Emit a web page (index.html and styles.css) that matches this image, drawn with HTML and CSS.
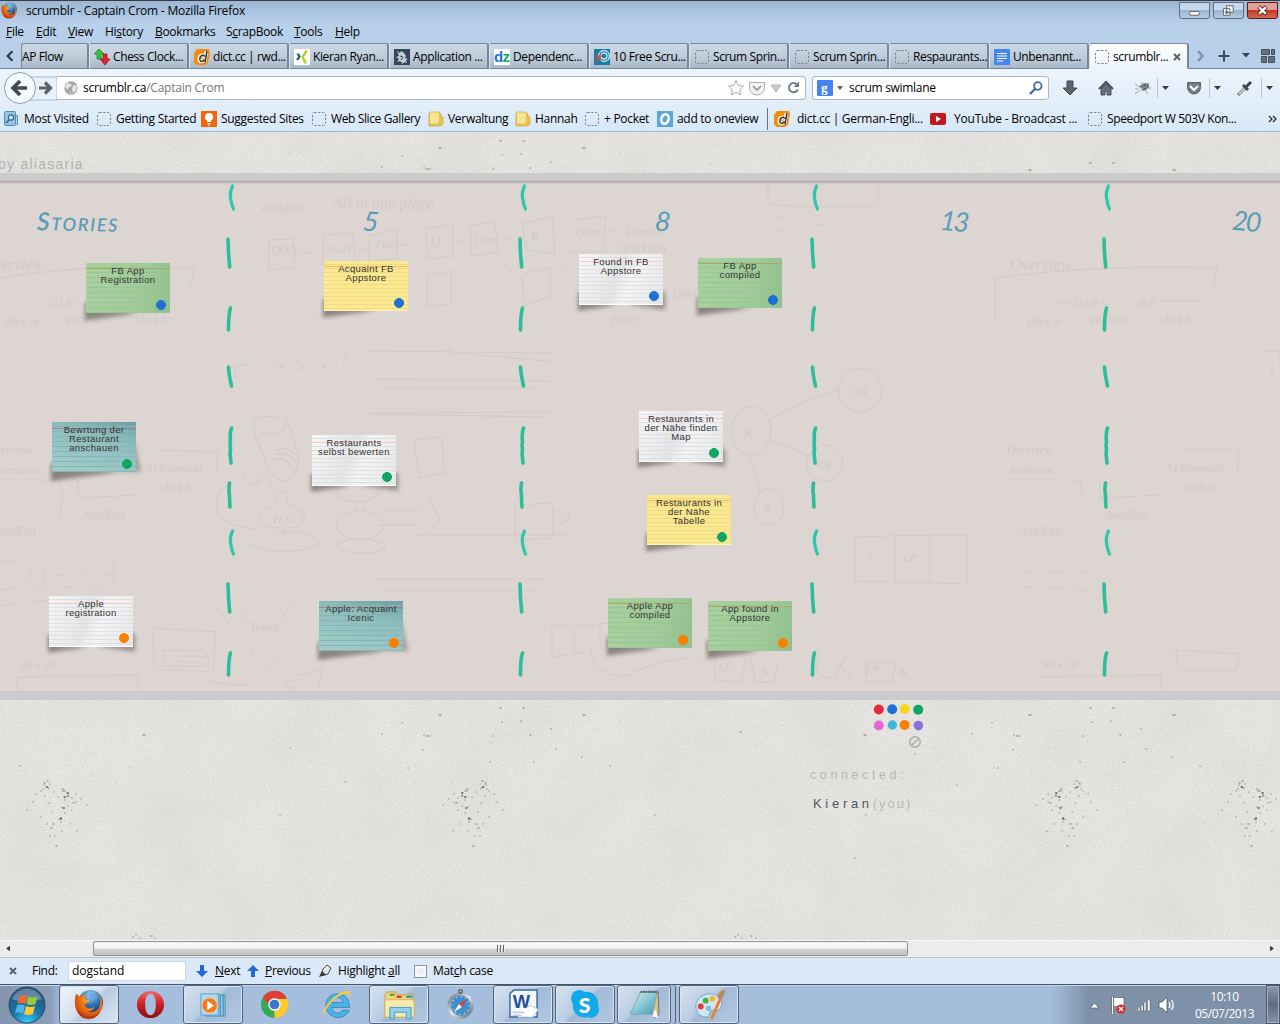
FILE: index.html
```html
<!DOCTYPE html>
<html lang="en">
<head>
<meta charset="utf-8">
<title>scrumblr - Captain Crom</title>
<link rel="stylesheet" href="styles.css">
</head>
<body>
<svg class="defs" width="0" height="0">
  <defs>
    <radialGradient id="fox" cx=".6" cy=".3" r=".8"><stop offset="0" stop-color="#ffc23a"/><stop offset=".5" stop-color="#ee7013"/><stop offset="1" stop-color="#b8330b"/></radialGradient>
    <radialGradient id="globe" cx=".5" cy=".2" r=".8"><stop offset="0" stop-color="#9bd4f5"/><stop offset=".5" stop-color="#2f72b8"/><stop offset="1" stop-color="#12306d"/></radialGradient>
    <radialGradient id="orb" cx=".5" cy="1" r=".9"><stop offset="0" stop-color="#35d5ff"/><stop offset=".45" stop-color="#1b77ad"/><stop offset="1" stop-color="#27547d"/></radialGradient>
    <linearGradient id="opera" x2="0" y2="1"><stop offset="0" stop-color="#f0696b"/><stop offset=".5" stop-color="#c81f27"/><stop offset="1" stop-color="#8c0d14"/></linearGradient>
    <linearGradient id="steel" x2="1" y2="1"><stop offset="0" stop-color="#5d6268"/><stop offset=".5" stop-color="#e8ebee"/><stop offset="1" stop-color="#4b5057"/></linearGradient>
    <linearGradient id="pad" x2="1" y2="1"><stop offset="0" stop-color="#d4f3f5"/><stop offset="1" stop-color="#3d9fb4"/></linearGradient>
    <symbol id="blank" viewBox="0 0 16 16"><rect x="1.5" y="1.5" width="13" height="13" rx="2" fill="none" stroke="#777f88" stroke-dasharray="2.2 1.6"/></symbol>
    <symbol id="folder" viewBox="0 0 16 16"><path d="M2 1h9l1 2h1v3h2v7l-2 2H1V2z" fill="#e6c453" stroke="#cba738" stroke-width=".7"/><path d="M2 1.500h9V11l-2 1.500H2z" fill="#f8e496"/></symbol>
    <symbol id="dict" viewBox="0 0 16 16"><path d="M3 0h12l1 3-2 11-3 2H3l-3-2V4z" fill="#f58b0a"/><path d="M12.500 2l-2 11.500M10.300 7.500c-2-2.500-5.300-.5-5 3 .3 2.500 3 2.500 4.500 0" fill="none" stroke="#fff" stroke-width="3.600"/><path d="M13 2l-2 11.500M10.800 7.500c-2-2.500-5.300-.5-5 3 .3 2.500 3 2.500 4.500 0" fill="none" stroke="#333" stroke-width="1.500"/></symbol>
    <symbol id="firefox" viewBox="0 0 32 32"><circle cx="17" cy="14" r="13" fill="url(#globe)"/><path d="M15 5c3-1 8 0 9 4-3-1-5 0-6 2" fill="#65aadb"/><path d="M2 5c2 1 3 2 4 3 2-2 5-2 7-2-2 2-2 4-1 5 2 0 3 0 4 1-1 3-4 2-5 4 1 5 7 5 10 2-1 4-4 6-8 5 7 3 14-1 14-8 1-5-1-9-4-12 6 4 8 12 5 19-3 7-10 10-17 8C2 27-1 17 2 5z" fill="url(#fox)"/><path d="M4 20c4 9 16 12 23 3-3 7-9 9-15 8-5-1-8-5-8-11z" fill="#a92b10" opacity=".6"/></symbol>
    <symbol id="down" viewBox="0 0 12 14"><path d="M4 1h4v6h4l-6 6-6-6h4z"/></symbol>
    <symbol id="caret" viewBox="0 0 8 5"><path d="M0 0h8L4 5z"/></symbol>
    <g id="dashes" fill="none" stroke="#2dbd9a" stroke-width="3.600" stroke-linecap="round" stroke-linejoin="round">
      <path d="M12.500 6q-3 6-2 12 1 7 3 11" stroke="#2fc9a9" stroke-width="3.200"/>
      <path d="M8 59l.5 14 1.200 14M10.500 128q-2 6-2 22M8.500 187q0 5 3 19M11.500 248q-2 5-1 14l-.5 3q1 5 0 8l1 10M9.500 303q-1 8 0 12 0 6 .5 12"/>
    </g>
    <symbol id="divider" viewBox="0 0 20 508"><use href="#dashes" y="-2"/><use href="#dashes" y="343"/></symbol>
    <g id="cluster" fill="none" stroke-linecap="round">
      <path stroke="#8b8579" stroke-width="1.500" opacity=".75" d="M0 0h.1M5-6h1M3 5h.1M-4 3h.1M10 2h.1M14-3h.1M-8-1h.1M-13 4h.1M6 12h.1M3 18h.1M8 24h1M16 17h.1M19 8h.1M23 1h.1M27-4h.1M20-14h1M24-10h.1M18-11h.1M-2 29h.1M6 36h.1M16 33h1M13 41h.1M21 29h.1M32-1h.1M35 7h.1M-9 36h.1M11 51h1M-19 10h.1M41 15h.1M27 22h.1M-1 1h2M-6 8h1M-4 15h.1M0 11h.1M3-4h2M-8 7h.1M23-12h1M25-6h.1M19-7h1M7 27h.1M14 29h1M18 41h.1"/>
      <path stroke="#5d584e" stroke-width="1.900" opacity=".8" d="M0-2h.6M3 2h.6M7 23v1M21-8h.5M4 13h.5"/>
      <path stroke="#aaa59b" stroke-width="1.200" opacity=".6" d="M-25-20h.1M-40 10h.1M-48-12h.1M-34 26h.1M40-30h.1M55-20h.1M63-5h.1M58 28h.1M48 47h.1M2-30h.1M-7-48h.1M31-53h.1M71 19h.1M-62-28h.1"/>
    </g>
    <g id="sparse" fill="none" stroke-linecap="round">
      <path stroke="#77736a" stroke-width="1.600" opacity=".65" d="M0 0h1M23 0h1M2 14h.1M21 13h.1M-61 7h2M83 7h2M-76 27h.1M-73 28h1M-70 28h.1M-98 15h.1M51 21h.1M-7 28h.1M30 27h.6M56 41h.1M-118 26h.1M82 49h.1M-77 42h.1M-92 60h.1M110 58h.1M-10 54h.1M34 54h.1"/>
      <path stroke="#aaa59b" stroke-width="1.200" opacity=".7" d="M-140 12h.1M-155 40h.1M-180 20h.1M-190 54h.1M-210 12h.1M-225 33h.1M120 12h.1M145 31h.1M165 16h.1M180 45h.1M211 23h.1M236 9h.1M255 38h.1M281 17h.1M-48 74h.1M65 71h.1"/>
    </g>
    <filter id="grain" x="0" y="0" width="100%" height="100%"><feTurbulence type="fractalNoise" baseFrequency=".7" numOctaves="2" seed="4"/><feColorMatrix values="0 0 0 0 .5  0 0 0 0 .49  0 0 0 0 .46  .7 0 0 0 -.26"/></filter>
    <filter id="mottle" x="0" y="0" width="100%" height="100%"><feTurbulence type="fractalNoise" baseFrequency=".014" numOctaves="3" seed="9"/><feColorMatrix values="0 0 0 0 .45  0 0 0 0 .43  0 0 0 0 .38  .2 0 0 0 -.07"/></filter>
  </defs>
</svg>

<header class="chrome">
  <div class="titlebar">
    <svg class="i17"><use href="#firefox"/></svg>
    <span class="title">scrumblr - Captain Crom - Mozilla Firefox</span>
    <div class="winbtns">
      <svg class="winbtn" viewBox="0 0 30 16"><rect x="10" y="9" width="10" height="4" rx="1" fill="#fff" stroke="#555e6c"/></svg>
      <svg class="winbtn" viewBox="0 0 30 16"><path d="M13 3h7v7h-7zM9.500 6h7v7h-7z" fill="#fff" stroke="#555e6c"/><path d="M12 9h2v2h-2z" fill="#8b9cb1" stroke="#555e6c"/></svg>
      <svg class="winbtn close" viewBox="0 0 30 16"><path d="M11 4l8 8M19 4l-8 8" stroke="#5a3434" stroke-width="4.500"/><path d="M11.500 4.500l7 7M18.500 4.500l-7 7" stroke="#fff" stroke-width="2.500"/></svg>
    </div>
  </div>
  <nav class="menu"><span><u>F</u>ile</span><span><u>E</u>dit</span><span><u>V</u>iew</span><span>Hi<u>s</u>tory</span><span><u>B</u>ookmarks</span><span>S<u>c</u>rapBook</span><span><u>T</u>ools</span><span><u>H</u>elp</span></nav>
  <div class="tabs">
    <svg class="scroll-left" viewBox="0 0 22 26"><path d="M13 8l-5 5 5 5" fill="none" stroke="#2e3640" stroke-width="2.200"/></svg>
    <div class="tab cut"><span>AP Flow</span></div>
    <div class="tab"><svg class="i16" viewBox="0 0 16 16"><path d="M5 0l5 5H7v5H3V5H0z" fill="#2fc83a" stroke="#167b20" stroke-width=".7"/><path d="M9 5h4v5h3l-5 6-5-6h3z" fill="#e2252e" stroke="#8b1116" stroke-width=".7"/></svg><span>Chess Clock...</span></div>
    <div class="tab"><svg class="i16"><use href="#dict"/></svg><span>dict.cc | rwd...</span></div>
    <div class="tab"><svg class="i16" viewBox="0 0 16 16"><rect width="16" height="16" fill="#fff"/><path d="M2.500 4.500h2.500l1.800 3L4.500 11H2l2.300-3.500z" fill="#0d5c63"/><path d="M11.500 1.500h2.700L10 8l3 6.500h-2.700L7.300 8z" fill="#b3cf1b"/></svg><span>Kieran Ryan...</span></div>
    <div class="tab"><svg class="i16" viewBox="0 0 16 16"><rect width="16" height="16" fill="#33475a"/><path d="M3 2l3 2 1-2 3 2 2 3-1 2 3 1-2 1 1 3-3-1-1 2-3-3-3 1 2-3-3-2 3-1z" fill="#c7cdd2"/><path d="M6 7l3 1-2 3" stroke="#33475a" fill="none"/></svg><span>Application ...</span></div>
    <div class="tab"><svg class="i16" viewBox="0 0 16 16"><rect width="16" height="16" fill="#fff"/><text x="0" y="13" class="dz" fill="#1673d8">d</text><text x="8.500" y="13" class="dz" fill="#21a55d">z</text></svg><span>Dependenc...</span></div>
    <div class="tab"><svg class="i16" viewBox="0 0 16 16"><rect width="16" height="16" fill="#187ca9"/><g fill="none" stroke="#cbe4ec" stroke-width="1.300"><circle cx="10" cy="7" r="5.500"/><circle cx="10" cy="7" r="3"/></g><path d="M2 4l3 3 4-1-3 3 2 4-4-3-3 4 2-6z" fill="#d94d42"/></svg><span>10 Free Scru...</span></div>
    <div class="tab"><svg class="i16"><use href="#blank"/></svg><span>Scrum Sprin...</span></div>
    <div class="tab"><svg class="i16"><use href="#blank"/></svg><span>Scrum Sprin...</span></div>
    <div class="tab"><svg class="i16"><use href="#blank"/></svg><span>Respaurants...</span></div>
    <div class="tab"><svg class="i16" viewBox="0 0 16 16"><rect width="16" height="16" rx="1" fill="#4285f4"/><path d="M3 4.500h10M3 7h10M3 9.500h10M3 12h6" stroke="#fff" stroke-width="1.200"/></svg><span>Unbenannt...</span></div>
    <div class="tab active"><svg class="i16"><use href="#blank"/></svg><span>scrumblr...</span><svg class="tabx" viewBox="0 0 8 8"><path d="M1 1l6 6M7 1L1 7" stroke="#555d66" stroke-width="1.800"/></svg></div>
    <svg class="tabtools" viewBox="0 0 91 26"><path d="M9 8l4.500 5L9 18" fill="none" stroke="#7b8ea3" stroke-width="2.200"/><path d="M35 7.500v11M29.500 13h11" stroke="#3f4955" stroke-width="2.200"/><path d="M53 10h8l-4 4.500z" fill="#3a4450"/><g fill="#66717e" stroke="#46505c"><path d="M72.500 6.500h8v5h-8zM82.500 6.500h3v5h-3zM72.500 13.500h5v6h-5zM79.500 13.500h6v6h-6z"/></g></svg>
  </div>
  <div class="navbar">
    <svg class="back" viewBox="0 0 57 36"><path d="M20 7h37v23H20z" fill="#e6f1fc" stroke="#a9bdd2"/><circle cx="20" cy="18" r="15.500" fill="#f5faff" stroke="#8c9fb5"/><path d="M20 11l-7 7 7 7M14 18h13" fill="none" stroke="#414b56" stroke-width="3.600"/><path d="M45 12.500l5.500 5.500-5.500 5.500M39 18h10.500" fill="none" stroke="#56616d" stroke-width="3.200"/></svg>
    <div class="urlbar">
      <svg class="i14" viewBox="0 0 14 14"><circle cx="7" cy="7" r="6.700" fill="#a5a5a5"/><path d="M3 2l4 1 1 2-3 1-1 3-3-3zM9 4l4 1-1 5-3 2-1-4zM5 10l2 1v2z" fill="#e5e5e5"/></svg>
      <span class="url">scrumblr.ca<em>/Captain Crom</em></span>
      <svg class="urltools" viewBox="0 0 74 20"><path d="M10 2.500l2.300 4.900 5.200.7-3.800 3.700.9 5.200-4.600-2.500L5.400 17l.9-5.200-3.800-3.700 5.200-.7z" fill="#fafafa" stroke="#a8adb3"/><path d="M23.500 4.500h15v5a7.500 7.500 0 0 1-15 0z" fill="#f4f4f4" stroke="#a8adb3"/><path d="M27 8l4 4 4-4" fill="none" stroke="#a0a5ab" stroke-width="2"/><path d="M45 7h10l-5 7z" fill="#c4cbd5" stroke="#98a1ac" stroke-width=".7"/><path d="M71 6.500a4.600 4.600 0 1 0 .8 5" fill="none" stroke="#737d88" stroke-width="2"/><path d="M73 3.500v5.500h-5.500z" fill="#737d88"/></svg>
    </div>
    <div class="search">
      <svg class="i16" viewBox="0 0 16 16"><rect width="16" height="16" rx="1" fill="#4584f0"/><text x="4" y="11.500" class="gg">g</text></svg>
      <svg class="caret"><use href="#caret"/></svg>
      <span>scrum swimlane</span>
      <svg class="lens" viewBox="0 0 14 14"><circle cx="8.800" cy="5" r="3.800" fill="none" stroke="#3a6fa8" stroke-width="1.800"/><path d="M6 8l-5 5" stroke="#3a6fa8" stroke-width="2.400"/></svg>
    </div>
    <svg class="navtools" viewBox="0 0 229 36"><path d="M16 11h6v7h4l-7 7-7-7h4z" fill="#5b6470" stroke="#404954"/><path d="M48 19l7-7 7 7" fill="none" stroke="#47515d" stroke-width="2"/><path d="M50 19l5-5 5 5v6h-4v-4h-2v4h-4z" fill="#65707d" stroke="#47515d"/><ellipse cx="93" cy="17" rx="5.500" ry="3.200" transform="rotate(-25 93 17)" fill="#66696c"/><path d="M84 14l4 3M84 19l4 0M91 12l1 6M98 13l-6 6M84 24l5-4M94 20l3 4M95 18h5" stroke="#9a9ea2"/><circle cx="89" cy="19.500" r="2.300" fill="#ddd"/><path d="M106.500 8v20M158.500 8v20M210.500 8v20" stroke="#bac8d6"/><g fill="#333b44"><path d="M111 16h7l-3.500 4zM163 16h7l-3.500 4zM215 16h7l-3.500 4z"/></g><path d="M136.500 12.500h13v5a6.500 6.500 0 0 1-13 0z" fill="#757b82" stroke="#5b6065"/><path d="M139 16l4 4 4-4" fill="none" stroke="#fff" stroke-width="2.200"/><path d="M187 25l8-8" stroke="#70767c" stroke-width="3"/><path d="M188 24l6-6" stroke="#e4e6e8" stroke-width="1.300"/><path d="M192 15l5 5M195 17l5-5" stroke="#3f4449" stroke-width="3"/></svg>
  </div>
  <nav class="bookmarks">
    <span><svg class="i16" viewBox="0 0 16 16"><rect x=".5" y=".5" width="11" height="14" rx="1" fill="#94c6e5" stroke="#4b8fb9"/><path d="M12 4.500h1.500v9H12" fill="#b6daf0" stroke="#4b8fb9"/><circle cx="7" cy="6.500" r="2.600" fill="#def1fb" stroke="#33617f" stroke-width="1.200"/><path d="M5 9l-3 3" stroke="#33617f" stroke-width="1.600"/></svg>Most Visited</span>
    <span><svg class="i16"><use href="#blank"/></svg>Getting Started</span>
    <span><svg class="i16" viewBox="0 0 16 16"><rect width="16" height="16" fill="#f4660c"/><path d="M8 2a4 4 0 0 0-2 7.500V11h4V9.500A4 4 0 0 0 8 2z" fill="#fff"/><path d="M6.500 12.500h3M7 14h2" stroke="#fff"/></svg>Suggested Sites</span>
    <span class="slice"><svg class="i16"><use href="#blank"/></svg>Web Slice Gallery</span>
    <span><svg class="i16"><use href="#folder"/></svg>Verwaltung</span>
    <span><svg class="i16"><use href="#folder"/></svg>Hannah</span>
    <span><svg class="i16"><use href="#blank"/></svg>+ Pocket</span>
    <span class="oneview"><svg class="i16" viewBox="0 0 16 16"><rect width="16" height="16" fill="#5aa7d8"/><ellipse cx="8" cy="8" rx="3.600" ry="4.800" transform="rotate(20 8 8)" fill="none" stroke="#fff" stroke-width="2.600"/></svg>add to oneview</span>
    <span class="wide"><svg class="i16"><use href="#dict"/></svg>dict.cc | German-Engli...</span>
    <span class="wide tube"><svg class="i16" viewBox="0 0 16 16"><rect y="2" width="16" height="12" rx="2" fill="#c4161c"/><path d="M6 5l5 3-5 3z" fill="#fff"/></svg>YouTube - Broadcast ...</span>
    <span class="slice"><svg class="i16"><use href="#blank"/></svg>Speedport W 503V Kon...</span>
    <svg class="more" viewBox="0 0 9 8"><path d="M1 1l3 3-3 3M5 1l3 3-3 3" fill="none" stroke="#222" stroke-width="1.200"/></svg>
  </nav>
</header>

<main class="page">
  <svg class="concrete" viewBox="0 132 1280 808">
    <rect y="132" width="1280" height="808" filter="url(#mottle)"/>
    <rect y="132" width="1280" height="808" filter="url(#grain)"/>
    <use href="#sparse" x="1090" y="163"/><use href="#sparse" x="500" y="141"/><use href="#sparse" x="-90" y="160"/>
    <use href="#sparse" x="1090" y="708"/><use href="#sparse" x="500" y="708"/><use href="#sparse" x="-90" y="708"/>
    <use href="#cluster" x="1056" y="795"/><use href="#cluster" x="462" y="795"/>
    <use href="#cluster" transform="translate(68 795) scale(-1 1)"/><use href="#cluster" transform="translate(1263 795) scale(-1 1)"/>
    <g fill="none" stroke="#77716a" stroke-width="1.500" stroke-linecap="round" opacity=".6"><path d="M864 735h2M143 735h2M915 754h.1M866 815h.1M957 785h.1M855 858h.1M345 782h.1M133 937h.5M136 935h.1M140 938h.1M151 936h1M155 938h.1M735 937h.5M738 935h.1M742 938h.1M751 936h1M756 938h.1M280 815h.1M655 815h.1M740 732h1M290 748h.1"/></g>
  </svg>
  <div class="byline">by aliasaria</div>
  <section class="board">
    <svg class="sketch" viewBox="0 182 1280 508">
      <g fill="none" stroke="#d3cbc7" stroke-width="1.100" stroke-linecap="round">
        <path d="M269 240l24-1 2 28-26 3zM323 235l30-2 2 30-32 2zM368 236l29-6v28l-28 4zM426 228l27-3v31l-25 3zM470 226l25-4 3 30-26 4zM522 224l30-8 3 38-28-4zM573 220l33-4-3 36-32 0M299 253h14M357 249h8M400 245h8M457 241h8M503 238h8M554 234h9M609 231h7M502 262l10 11M557 273l10-12M427 275l24-4v33l-24 3zM522 274l28-6v28l-26 10z"/>
        <path d="M234 352h114l-5 14M235 376v-11h15M277 362l6 4-6 4M297 362l6 4-6 4M319 362l6 4-6 4M366 351l185 2M374 379l176 2M370 413l180-1M382 388h155M373 414l174 3M450 343v12M460 353l94 9"/>
        <ellipse cx="269" cy="425" rx="16" ry="9"/><path d="M253 430l15 37q6 14 19 14 12-10 12-27l-13-37M272 460q10-5 19 5M274 455q12-5 20 5M277 450q10-4 18 4M243 475q8 14 16 6 4-6 10-6l2 10M230 482c-10 8-18 20-11 32 9 12 21 12 38 16M277 492h9l2 13c24 7 22 23-6 23-28 0-31-16-7-23zM250 540c-8 14 68 15 68 2 0-6-17-11-37-11M272 540l6-8h6l5 9"/><ellipse cx="360" cy="525" rx="23" ry="15"/><ellipse cx="361" cy="546" rx="24" ry="7"/><path d="M337 490q3 12 20 12 18 0 22-12M355 510v-8M365 510v-8M372 525h45M381 510h40M414 440l28-3 2 36-25 5zM412 535h155M374 579h172M385 590h150M515 505l38-2v35l-38 2zM554 510q30 5 2 16M430 500l10 20-9 12"/>
        <ellipse cx="751" cy="431" rx="20" ry="24" /><circle cx="860" cy="390" r="22"/><circle cx="825" cy="463" r="18"/><ellipse cx="769" cy="507" rx="15" ry="18"/><path d="M770 419q30-18 70-30M769 439l41 17M748 454q10 16 11 38M768 183v20q2 5 110 3V182M772 218h16M772 230h13M812 216h20M812 225h16"/>
        <path d="M855 537q50-2 112-2v49l-112-3zM895 536v45M930 537v45M889 557h10M995 278q100-14 222-10l-3 17M995 278v40M1056 302h14M1100 304h20M1160 301h40M1264 351h16v12M1272 375v-10"/>
        <path d="M0 278q80-14 194-10l-4 18M0 480h60l3 18-5 26M78 480v18l60-3M160 450l58 2-2 20M0 562h20M30 566v14M44 566v14M52 575h12M76 573h10M100 574h10M114 563v18M0 590l20-3M35 587h10M60 587h12M90 587h12M0 606l14-3M35 602l12-2M153 628l63 4-3 39q-20 0-59-1zM162 650l40 1q8 6 7 15h-44zM178 657h28M178 662h20M17 677l121-2v14M17 677v13"/>
        <path d="M552 626h48v-3l32 2M552 626v31l33-5M574 628v25M600 625v20M590 650q5 30 40 25 25-15 60-17M715 656v24l25 3 6-22M750 655l6 28 18-2 4-18M820 650q-10 30 14 28l12-22M840 664l14 18M866 662h30l-4 20h-26zM1040 677l121-2v14M1176 650l63 4-3 17-58-1zM1000 480h80l3 18M1100 480v18l60-3M1180 450h59l-2 25M1020 572h12M1050 572h12M1080 572h12M1020 587h14M1050 588h12M1075 590h12"/>
        <path d="M218 610l12 14M240 610l8 10M280 620l12-16M250 645l4 12M265 670l12-14M210 680q10 6 40 5M300 680l-15 0 5 10M300 675l22-6-4 20"/>
      </g>
      <g class="scrawl"><text x="261" y="212">workflow</text><text x="333" y="209" class="big">All in one place</text><text x="271" y="254">DOO</text><text x="329" y="253">start</text><text x="376" y="249">One</text><text x="430" y="246">LP</text><text x="474" y="244">Over</text><text x="531" y="240">K</text><text x="576" y="236">Over</text><text x="626" y="236">Launch</text><text x="622" y="252">Workflow</text><text x="672" y="297">Landing</text><text x="610" y="324">Timer</text><text x="744" y="437">K</text><text x="852" y="396">CR</text><text x="817" y="469">CR</text><text x="764" y="512">R</text><text x="868" y="562">C</text><text x="903" y="562">LP</text><text x="718" y="671">LP</text><text x="866" y="674">LP</text><text x="762" y="676">K</text><text x="900" y="676">K</text><text x="1010" y="270" class="big">Overview</text><text x="1" y="270" class="big">erview</text><text x="45" y="307">① LP</text><text x="1070" y="307">① LP</text><text x="1135" y="307">② K</text><text x="1027" y="326">click to</text><text x="1090" y="323">click to</text><text x="1160" y="323">click to</text><text x="4" y="326">click to</text><text x="66" y="323">click to</text><text x="136" y="323">click to</text><text x="1" y="454">erview</text><text x="1" y="474">create a</text><text x="146" y="472">5) Kommun</text><text x="160" y="491">click to</text><text x="82" y="519">Add/Edit</text><text x="1" y="535">dd/Edit</text><text x="273" y="523">H₂O</text><text x="1007" y="454">Overview</text><text x="1010" y="474">Kommun</text><text x="1167" y="472">5) Kommun</text><text x="1183" y="491">click to</text><text x="1105" y="519">Add/Edit</text><text x="1019" y="535">Add/Edit</text><text x="250" y="631">Token</text><text x="20" y="669">90 x 30</text><text x="1042" y="669">90 x 30</text></g>
    </svg>
    <div class="columns">
      <div class="col"><h2 class="stories">Stories</h2><svg class="divider"><use href="#divider"/></svg></div>
      <div class="col"><h2>5</h2><svg class="divider"><use href="#divider"/></svg></div>
      <div class="col"><h2>8</h2><svg class="divider"><use href="#divider"/></svg></div>
      <div class="col"><h2>13</h2><svg class="divider"><use href="#divider"/></svg></div>
      <div class="col"><h2>20</h2></div>
    </div>
    <article class="card green blue c1">FB App<br>Registration</article>
    <article class="card yellow blue c2">Acquaint FB<br>Appstore</article>
    <article class="card white blue c3">Found in FB<br>Appstore</article>
    <article class="card green blue c4">FB App<br>compiled</article>
    <article class="card teal emerald c5">Bewrtung der<br>Restaurant<br>anschauen</article>
    <article class="card white emerald c6">Restaurants<br>selbst bewerten</article>
    <article class="card white emerald c7">Restaurants in<br>der Nähe finden<br>Map</article>
    <article class="card yellow emerald c8">Restaurants in<br>der Nähe<br>Tabelle</article>
    <article class="card white orange c9">Apple<br>registration</article>
    <article class="card teal orange c10">Apple: Acquaint<br>Icenic</article>
    <article class="card green orange c11">Apple App<br>compiled</article>
    <article class="card green orange c12">App found in<br>Appstore</article>
  </section>
  <section class="below">
    <svg class="stickers" viewBox="0 0 54 46"><circle cx="5.800" cy="6.500" r="5" fill="#e5293a"/><circle cx="19.200" cy="6.300" r="5" fill="#1f6fd4"/><circle cx="31.600" cy="6" r="5" fill="#fbd51c"/><circle cx="45.200" cy="6.700" r="5" fill="#0fa562"/><circle cx="5.800" cy="22.500" r="4.900" fill="#e765d2"/><circle cx="19.400" cy="22" r="4.700" fill="#40b8d8"/><circle cx="31.600" cy="22" r="5" fill="#fb8000"/><circle cx="45.400" cy="22.600" r="4.800" fill="#8a70dd"/><circle cx="42" cy="39" r="5.200" fill="none" stroke="#b3b2b0" stroke-width="1.700"/><path d="M38.500 42.500l7-7" stroke="#b3b2b0" stroke-width="1.700"/></svg>
    <div class="connected">connected:</div>
    <div class="names"><b>Kieran</b><span>(you)</span></div>
  </section>
</main>

<div class="hscroll">
  <svg class="arrow" viewBox="0 0 17 17"><path d="M10 5v6L6 8z" fill="#333"/></svg>
  <div class="thumb"><i></i><i></i><i></i></div>
  <svg class="arrow" viewBox="0 0 17 17"><path d="M7 5v6l4-3z" fill="#333"/></svg>
</div>

<div class="findbar">
  <svg class="fx" viewBox="0 0 8 8"><path d="M1 1l6 6M7 1L1 7" stroke="#555d66" stroke-width="1.800"/></svg>
  <span class="fl">Find:</span>
  <div class="field">dogstand</div>
  <svg class="arr"><use href="#down"/></svg><span class="fn"><u>N</u>ext</span>
  <svg class="arr up"><use href="#down"/></svg><span class="fp"><u>P</u>revious</span>
  <svg class="pen" viewBox="0 0 14 14"><path d="M5 5l4-4 4 3-3 6-4 1-2-2z" fill="#e8e8e6" stroke="#444"/><path d="M4 7l4 4-7 2z" fill="#333"/></svg><span class="fh">Highlight <u>a</u>ll</span>
  <i class="check"></i><span>Mat<u>c</u>h case</span>
</div>

<footer class="taskbar">
  <div class="start"><svg viewBox="0 0 40 40"><circle cx="20" cy="20" r="18" fill="url(#orb)" stroke="#2c4a67"/><path d="M5 14a16 16 0 0 1 30 0q-15 6-30 0z" fill="#fff" opacity=".28"/><path d="M12.500 11.500q4.500-2.500 8-.5l-2 8q-4-2-8 0z" fill="#ef6a2f"/><path d="M21.500 11.500q5 2 9-.5l-2 8q-5 2-9 0z" fill="#9ac93b"/><path d="M10 20.500q4.500-2 8 0l-2 8q-4-2-8 0z" fill="#4db5ee"/><path d="M19 21q5 2 9 0l-2 8q-5 2-9 0z" fill="#fbc934"/></svg></div>
  <div class="app open lit"><svg><use href="#firefox"/></svg></div>
  <div class="app"><svg viewBox="0 0 32 32"><path fill-rule="evenodd" d="M16 2c8 0 14 6 14 14s-6 14-14 14S2 24 2 16 8 2 16 2zm0 3c-4 0-5.500 5-5.500 11S12 27 16 27s5.500-5 5.500-11S20 5 16 5z" fill="url(#opera)"/></svg></div>
  <div class="app open"><svg viewBox="0 0 32 32"><path d="M8 6h20v22H8z" fill="#8fc7e3" stroke="#4c93ba"/><path d="M23 6v22M26 6v22" stroke="#3f86af"/><path d="M3 5h18v22H3z" fill="#a9d9ee" stroke="#5a9fc2"/><circle cx="12" cy="17" r="8" fill="#f4791f" stroke="#fbd0a6"/><path d="M9.500 12l7 5-7 5z" fill="#fff"/></svg></div>
  <div class="app"><svg viewBox="0 0 32 32"><circle cx="16" cy="16" r="14" fill="#3aa757"/><path d="M16 30a14 14 0 0 0 13-20H16z" fill="#fccb2e"/><path d="M4 9l7 12 7-2-2-9H4z" fill="#3aa757"/><path d="M4 9A14 14 0 0 1 29 10H16l-6 6z" fill="#de3e33"/><circle cx="16" cy="16" r="6.500" fill="#f4f6f8"/><circle cx="16" cy="16" r="5" fill="#3c78c9"/></svg></div>
  <div class="app"><svg viewBox="0 0 32 32"><path d="M29.500 19H11c1 7 9 7 11 3h7c-4 11-23 10-24-5C5 1 30 0 29.500 19zM11 14h12c-1-7-11-7-12 0z" fill="#4db2e6" stroke="#2277b8" stroke-width=".7" fill-rule="evenodd"/><path d="M3 29C-2 20 18 1 28 2c4 1 2 5 1 7 0-2 0-4-3-4C18 4 2 21 3 29z" fill="#f8ce38"/></svg></div>
  <div class="app open"><svg viewBox="0 0 32 32"><path d="M1 6l2-3h9l2 3h16v23H1z" fill="#ecd27a" stroke="#c3a146"/><path d="M6 6h5" stroke="#43a047" stroke-width="2"/><path d="M13 8h5" stroke="#c62828" stroke-width="2"/><path d="M23 8h6" stroke="#1e88e5" stroke-width="2"/><path d="M1 11h30v18H1z" fill="#f8e9ac" stroke="#d6ba62"/><path d="M6 31V19h22v12h-5v-7H11v7z" fill="#8fd0ea" stroke="#4b9bc0"/></svg></div>
  <div class="app"><svg viewBox="0 0 32 32"><circle cx="16" cy="17" r="13.500" fill="url(#steel)"/><circle cx="16" cy="17" r="10.500" fill="#3f90c9"/><circle cx="16" cy="17" r="9" fill="none" stroke="#d5e6f2" stroke-dasharray="1 3.700" stroke-width="1.500"/><path d="M23 10l-5.500 8.500-3-3z" fill="#e23b2e"/><path d="M9 24l5.500-8.500 3 3z" fill="#f3f3f3"/><circle cx="16" cy="2.500" r="1.800" fill="none" stroke="#555" stroke-width="1.200"/></svg></div>
  <div class="app open"><svg viewBox="0 0 32 32"><path d="M6 1h24v28H2V5z" fill="#f4f8fd" stroke="#3965a8" stroke-width="1.500"/><text x="5" y="20" class="word">W</text><path d="M18 20l5-3 8 4-5 8H10" fill="#fff" stroke="#b7c7dd"/><path d="M5 24h12M5 27h9" stroke="#9db5d6"/></svg></div>
  <div class="app open"><svg viewBox="0 0 32 32"><path d="M9 1q4 0 6 2c9-1 15 6 14 14 4 8-4 15-11 12C9 31 2 24 3 16-1 9 2 2 9 1z" fill="#12a9ea"/><text x="9" y="24.500" class="skype">S</text></svg></div>
  <div class="app open stack"><svg viewBox="0 0 32 32"><path d="M14 3h16l1 23-4 4z" fill="#d9c38d" stroke="#6e6a5a"/><path d="M12 3h17l-5 23H1z" fill="url(#pad)" stroke="#7fa5ac"/><path d="M24 28l3-7 3 9z" fill="#fff"/><path d="M12 3h18" stroke="#4e5960" stroke-width="2.500" stroke-dasharray="1.500 1"/></svg></div>
  <div class="app open"><svg viewBox="0 0 32 32"><path d="M15 5c10-1 17 8 12 15-3 4-7 0-10 3-2 3 0 6-5 6-6 0-11-6-10-13C3 10 8 6 15 5z" fill="#cfe6f5" stroke="#6ba3c8"/><circle cx="7" cy="18" r="3" fill="#e23d34"/><circle cx="12" cy="12" r="3" fill="#4caf3c"/><circle cx="19" cy="10" r="3" fill="#f5b72e"/><circle cx="15" cy="20" r="2" fill="#9ccbe8" stroke="#5a93bb"/><path d="M28 8L18 31" stroke="#e8812a" stroke-width="3"/><path d="M24 9q2-9 9-8-2 4-4 9z" fill="#b98a5f"/></svg></div>
  <div class="tray">
    <svg class="trayicons" viewBox="0 0 90 40"><path d="M2 23h9l-4.500-5z" fill="#fff" stroke="#56657a" stroke-width=".8"/><path d="M24.500 12v17M26 13.500h9v7h-9" fill="#fff" stroke="#4b5663" stroke-width="3"/><path d="M24.500 12v17M26 13.500h9v7h-9" fill="#fff" stroke="#fff" stroke-width="1.400"/><circle cx="33" cy="24" r="4.500" fill="#da2b23"/><path d="M31 22l4 4M35 22l-4 4" stroke="#fff" stroke-width="1.400"/><path d="M47 26v-2h2v2zM50 26v-4h2v4zM53 26v-6h2v6zM56 26v-9h2v9zM59.500 26V15H62v11z" fill="#fff" stroke="#4b5663" stroke-width=".5"/><path d="M71 17h3l5-5v16l-5-5h-3z" fill="#fff" stroke="#4b5663" stroke-width=".8"/><path d="M81 17q2 3 0 6M83.500 15q3.500 5 0 10" fill="none" stroke="#fff" stroke-width="1.300"/></svg>
    <div class="clock">10:10<br>05/07/2013</div>
    <div class="peek"></div>
  </div>
</footer>
</body>
</html>
```
FILE: styles.css
```css
* { box-sizing: border-box; }
body { margin: 0; width: 1280px; height: 1024px; overflow: hidden; display: flex; flex-direction: column; font: 12px/16px "Open Sans", "Noto Sans", sans-serif; letter-spacing: -.3px; color: #000; background: #dae8f7; }
svg { display: block; flex: none; }
.defs { position: absolute; }
span { white-space: nowrap; }
u { text-underline-offset: 1px; }
.i16 { width: 16px; height: 16px; }
.i17 { width: 17px; height: 17px; }
.i14 { width: 14px; height: 14px; }

.chrome { height: 132px; flex: none; background: linear-gradient(#9ab6d4 0, #b9d0ea 24px, #b9cfe9 69px); border-bottom: 1px solid #9db9d0; }
.titlebar { height: 22px; border-top: 1px solid #3a3a40; display: flex; align-items: center; padding: 0 0 2px 1px; }
.title { margin-left: 8px; flex: 1; letter-spacing: -.22px; }
.winbtns { display: flex; gap: 3px; padding-right: 2px; align-self: flex-start; padding-top: 1px; }
.winbtn { width: 31px; height: 17px; border: 1px solid #5d6f88; border-radius: 0 0 3px 3px; background: linear-gradient(#c6d8ec 45%, #9bb3ce 50%, #b5cce4); }
.close { background: linear-gradient(#e0a093 45%, #bf3a22 50%, #d4694e); border-color: #5c1d1d; }
.menu { height: 21px; display: grid; grid-template-columns: 30px 32px 37px 50px 71px 68px 41px 40px; padding: 2px 0 0 6px; }

.tabs { height: 26px; display: flex; border-bottom: 1px solid #6f8195; }
.scroll-left { width: 21px; height: 26px; }
.tab { width: 100px; height: 26px; flex: none; display: flex; align-items: center; gap: 3px; padding: 1px 0 0 4px; border: 1px solid #77879a; border-left-color: #dce6f0; border-right: 2px solid #75859a; border-radius: 3px 3px 0 0; background: linear-gradient(#ccd9e6, #bccad8 60%, #a9b7c6); letter-spacing: -.38px; overflow: hidden; }
.cut { width: 68px; padding-left: 0; border-left-color: #77879a; }
.active { background: linear-gradient(#fff, #edf4fc); border-bottom-color: #edf4fc; }
.tabx { width: 8px; height: 8px; margin-left: 2px; }
.tabtools { width: 91px; height: 26px; }
.dz { font: bold 15px "Liberation Sans", sans-serif; }

.navbar { height: 37px; display: flex; align-items: center; background: linear-gradient(#edf4fc, #e1edf9); }
.back { width: 57px; height: 36px; }
.urlbar { width: 749px; height: 24px; display: flex; align-items: center; background: #fff; border: 1px solid #a7b8ca; border-left: 0; border-radius: 0 3px 3px 0; padding-left: 7px; }
.url { margin-left: 5px; flex: 1; letter-spacing: -.23px; }
.url em { font-style: normal; color: #777; }
.urltools { width: 74px; height: 20px; margin-right: 5px; }
.search { width: 237px; height: 24px; margin-left: 6px; display: flex; align-items: center; background: #fff; border: 1px solid #a7b8ca; border-radius: 3px; padding: 0 5px 0 4px; }
.search span { flex: 1; margin-left: 6px; }
.gg { font: bold 13px "Liberation Serif", serif; fill: #fff; }
.caret { width: 6px; height: 4px; margin-left: 4px; fill: #555; }
.lens { width: 14px; height: 14px; }
.navtools { width: 229px; height: 36px; margin-left: 2px; }

.bookmarks { height: 25px; display: grid; grid-template-columns: 92px 105px 110px 117px 87px 69px 73px 117px 156px 157px 181px 9px; align-items: center; padding-left: 4px; background: linear-gradient(#e1edf9, #d8e8f8); }
.bookmarks span { display: flex; align-items: center; gap: 4px; }
.bookmarks .wide { gap: 7px; }
.bookmarks .tube { gap: 8px; letter-spacing: -.22px; }
.bookmarks .slice { letter-spacing: -.38px; }
.oneview { border-right: 1px solid #66727f; margin-right: 6px; height: 22px; }
.more { width: 9px; height: 8px; }

.page { position: relative; height: 808px; flex: none; background: #e8e7e4; font-family: "Liberation Sans", Arial, sans-serif; overflow: hidden; }
.concrete { position: absolute; inset: 0; width: 1280px; height: 808px; }
.byline { position: relative; height: 41px; padding-top: 24px; margin-left: -2px; font-size: 14px; letter-spacing: 1.25px; color: #b2b1af; }
.board { position: relative; isolation: isolate; height: 527px; border: solid #cbcbcb; border-width: 8px 0 9px; background: #ddd5d1; box-shadow: inset 0 4px 3px -3px #948d8a; overflow: hidden; }
.sketch { position: absolute; left: 0; top: 1px; width: 1280px; height: 508px; z-index: -2; }
.scrawl { font: italic 12px "Liberation Serif", serif; fill: #cfc7c3; opacity: .8; letter-spacing: 0; }
.scrawl .big { font-size: 16px; }
.columns { display: flex; width: 1460px; margin-left: -68px; }
.col { position: relative; width: 292px; height: 510px; }
.col h2 { margin: 25px 0 0; text-align: center; font: italic 27px/30px Lato, sans-serif; letter-spacing: -2px; color: #5b9cb9; transform: rotate(5deg); }
.col .stories { font-variant: small-caps; font-size: 25px; font-weight: 600; letter-spacing: 1.7px; transform: rotate(1deg); }
.divider { position: absolute; left: 288px; top: 1px; width: 20px; height: 508px; }

.card { position: absolute; width: 84px; height: 50px; padding-top: 3px; text-align: center; font-size: 9.5px; line-height: 9px; letter-spacing: .35px; color: #333; background: radial-gradient(circle at 75px 42px, var(--dot) 4.600px, transparent 5.200px), var(--paper); }
.card::before, .card::after { content: ""; position: absolute; z-index: -1; }
.card::before { left: -1px; bottom: -4px; width: 56px; height: 18px; background: linear-gradient(90deg, #6b6562, #837c79 70%, transparent); opacity: .75; transform: skewY(-7deg); filter: blur(2px); }
.white::after, .teal::after { right: -2px; bottom: -3px; width: 42px; height: 18px; background: linear-gradient(270deg, #6b6562, #837c79 70%, transparent); opacity: .65; transform: skewY(7deg); filter: blur(2px); }
.white::before { width: 42px; }
.teal::after { width: 20px; height: 30px; transform: skewX(12deg); bottom: 0; opacity: .5; }
.teal::before { width: 80px; }
.blue { --dot: #1f70d6; }
.emerald { --dot: #10a563; }
.orange { --dot: #fb8000; }
.green { --paper: linear-gradient(transparent 5px, #a9a970 5px, #a9a970 6px, transparent 6px), repeating-linear-gradient(transparent 0 4px, #97c594 4px 5px), linear-gradient(100deg, #a9d19f, #a0cb98 65%, #8fbe8c); }
.yellow { --paper: linear-gradient(transparent 5px, #f6bb68 5px, #f6bb68 6px, transparent 6px), repeating-linear-gradient(transparent 0 3px, #ecdb88 3px 4px), linear-gradient(#fbe88d, #fde890); border-bottom: 1px solid #fff2b4; }
.white { height: 51px; --paper: linear-gradient(transparent 7px, #f0c8cd 7px, #f0c8cd 8px, transparent 8px), repeating-linear-gradient(transparent 0 3px, #dbe0e6 3px 4px), linear-gradient(110deg, #f7f7f7, #e5e5e6 45%, #f4f4f5 60%, #e7e7e8); border-bottom: 1px solid #fff; }
.teal { --paper: linear-gradient(transparent 6px, #9f8991 6px, #9f8991 7px, transparent 7px), repeating-linear-gradient(transparent 0 4px, #86b6ba 4px 5px), linear-gradient(15deg, #a2ccc9, #8fbebd 65%, #6d9fa2); }
.c1 { left: 86px; top: 82px; }
.c2 { left: 324px; top: 80px; }
.c3 { left: 579px; top: 73px; }
.c4 { left: 698px; top: 77px; }
.c5 { left: 52px; top: 241px; }
.c6 { left: 312px; top: 254px; }
.c7 { left: 639px; top: 230px; }
.c8 { left: 647px; top: 314px; }
.c9 { left: 49px; top: 415px; }
.c10 { left: 319px; top: 420px; }
.c11 { left: 608px; top: 417px; }
.c12 { left: 708px; top: 420px; }

.below { position: relative; padding-left: 810px; }
.stickers { width: 54px; height: 46px; margin: 3px 0 0 63px; }
.connected { margin-top: 18px; font-size: 12.500px; letter-spacing: 3.6px; color: #b9b8b6; }
.names { margin: 13px 0 0 3px; font-size: 13px; color: #b9b8b6; letter-spacing: 2px; }
.names b { font-weight: 400; color: #55555c; letter-spacing: 3.7px; }

.hscroll { height: 18px; flex: none; display: flex; background: #ececec; border-top: 1px solid #f8f8f8; border-bottom: 1px solid #b5c3d0; }
.arrow { width: 17px; height: 16px; }
.arrow + .thumb { margin: 0 355px 0 76px; }
.thumb { width: 815px; height: 15px; display: flex; justify-content: center; align-items: center; gap: 1px; border: 1px solid #909090; border-radius: 2px; background: linear-gradient(#f5f5f5 45%, #d4d4d4 55%, #c2c2c2); }
.thumb i { width: 2px; height: 7px; background: #666; border-right: 1px solid #eee; }

.findbar { height: 26px; flex: none; display: flex; align-items: center; padding-left: 9px; background: #dae8f8; }
.fx { width: 8px; height: 8px; }
.fl { width: 36px; margin-left: 15px; }
.field { width: 118px; height: 20px; margin-right: 10px; padding: 1px 3px; background: #fff; border: 1px solid #ccd8e5; letter-spacing: 0; }
.arr { width: 12px; height: 14px; fill: #2467d8; }
.up { transform: rotate(180deg); }
.fn { width: 32px; margin-left: 7px; }
.fp { width: 53px; margin-left: 6px; }
.pen { width: 14px; height: 14px; }
.fh { width: 76px; margin-left: 6px; }
.check { width: 13px; height: 13px; border: 1px solid #8e959d; background: #eef0f2; box-shadow: inset 0 0 0 2px #f8f8f8; margin-right: 6px; }

.taskbar { height: 40px; flex: none; display: flex; border-top: 1px solid #45556a; background: linear-gradient(90deg, #8495af, #8b9db7 50px, #a5bedd 62px, #a5bedc 1050px, #7f91a9 1088px); box-shadow: inset 0 1px #c4d3e5; }
.start { width: 57px; padding-left: 7px; }
.start svg { width: 40px; height: 40px; }
.app { width: 62px; height: 39px; display: flex; align-items: center; justify-content: center; flex: none; }
.app svg { width: 31px; height: 31px; }
.open { width: 60px; margin: 0 0 0 2px; border: 1px solid #50647f; border-radius: 3px; background: linear-gradient(135deg, #d7e2ef 0, #b9cce2 45%, #a2bad8 50%, #b3c8e1); box-shadow: inset 0 0 0 1px #d9e4f1; }
.lit { background: linear-gradient(135deg, #eff5fb 0, #d5e0ee 45%, #b9cbe0 55%, #dce7f2); }
.stack { width: 54px; margin-right: 6px; box-shadow: inset 0 0 0 1px #d9e4f1, 4px 0 #a9bfd9, 5px 0 #50647f; }
.word { font: bold 19px "Liberation Sans", sans-serif; fill: #1f4fa0; }
.skype { font: 900 22px Lato, sans-serif; fill: #fff; }
.tray { display: flex; margin-left: auto; }
.trayicons { width: 90px; height: 40px; }
.clock { width: 88px; padding: 3px 0 0 5px; text-align: center; color: #fff; line-height: 17px; letter-spacing: -.45px; }
.peek { width: 14px; border: 1px solid #4b596c; box-shadow: inset 0 0 0 1px #a3b1c3; background: linear-gradient(#8a99ad, #5e6d82 50%, #8694a8); }
```
